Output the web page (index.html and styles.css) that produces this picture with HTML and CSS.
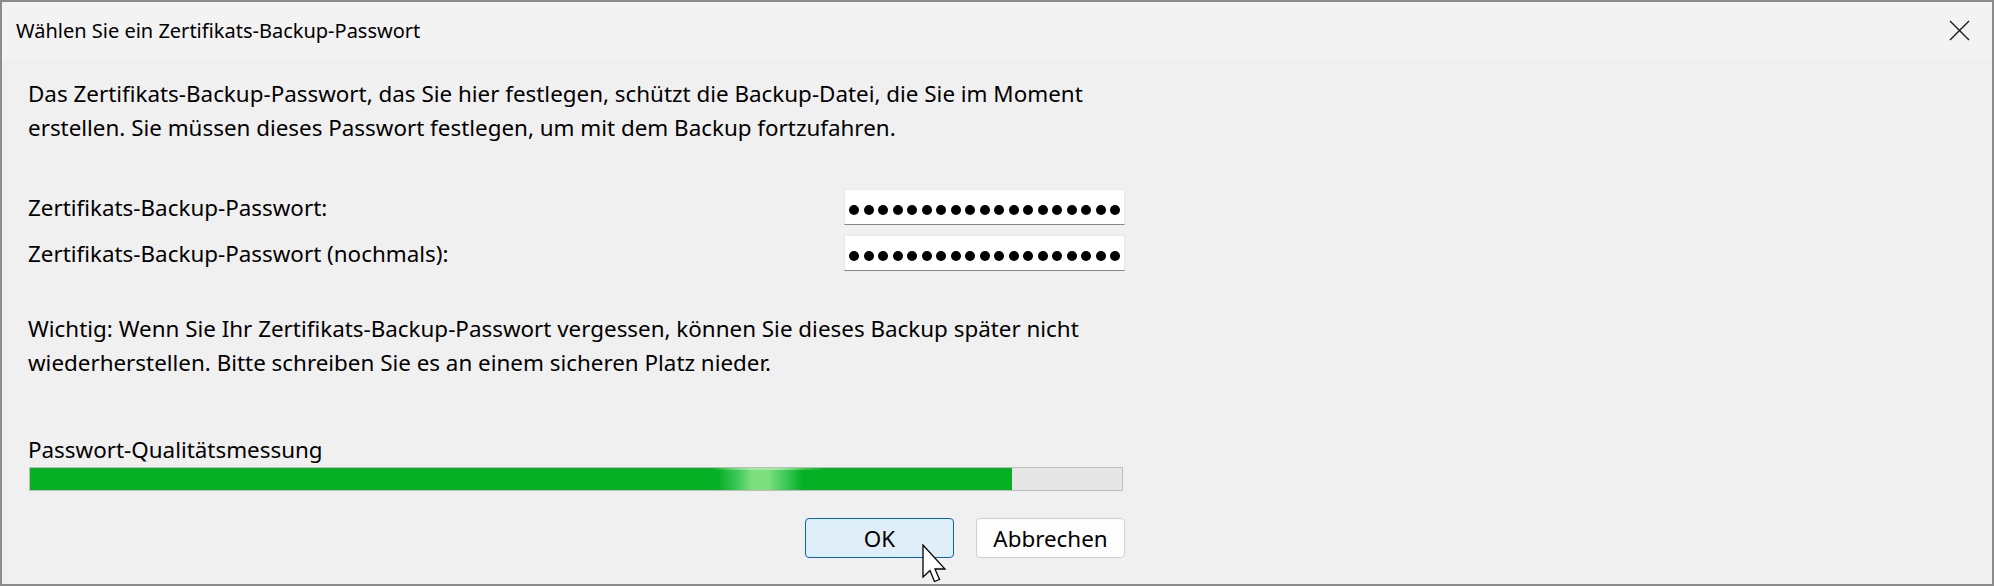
FILE: index.html
```html
<!DOCTYPE html>
<html lang="de">
<head>
<meta charset="utf-8">
<title>Wählen Sie ein Zertifikats-Backup-Passwort</title>
<link rel="stylesheet" href="styles.css">
</head>
<body>
  <div class="dialog">
    <div class="titlebar">
      <span class="title">Wählen Sie ein Zertifikats-Backup-Passwort</span>
      <svg class="close" width="21" height="21" viewBox="0 0 21 21">
        <path d="M1 1 L20 20 M20 1 L1 20" stroke="#1a1a1a" stroke-width="1.4" fill="none"/>
      </svg>
    </div>
    <div class="content">
      <p class="intro">Das Zertifikats-Backup-Passwort, das Sie hier festlegen, schützt die Backup-Datei, die Sie im Moment<br>erstellen. Sie müssen dieses Passwort festlegen, um mit dem Backup fortzufahren.</p>

      <div class="fields">
        <label>Zertifikats-Backup-Passwort:</label>
        <div class="field">
          <span class="dot"></span><span class="dot"></span><span class="dot"></span><span class="dot"></span><span class="dot"></span><span class="dot"></span><span class="dot"></span><span class="dot"></span><span class="dot"></span><span class="dot"></span><span class="dot"></span><span class="dot"></span><span class="dot"></span><span class="dot"></span><span class="dot"></span><span class="dot"></span><span class="dot"></span><span class="dot"></span><span class="dot"></span>
        </div>
        <label>Zertifikats-Backup-Passwort (nochmals):</label>
        <div class="field">
          <span class="dot"></span><span class="dot"></span><span class="dot"></span><span class="dot"></span><span class="dot"></span><span class="dot"></span><span class="dot"></span><span class="dot"></span><span class="dot"></span><span class="dot"></span><span class="dot"></span><span class="dot"></span><span class="dot"></span><span class="dot"></span><span class="dot"></span><span class="dot"></span><span class="dot"></span><span class="dot"></span><span class="dot"></span>
        </div>
      </div>

      <p class="warning">Wichtig: Wenn Sie Ihr Zertifikats-Backup-Passwort vergessen, können Sie dieses Backup später nicht<br>wiederherstellen. Bitte schreiben Sie es an einem sicheren Platz nieder.</p>

      <div class="quality-label">Passwort-Qualitätsmessung</div>
      <div class="meter"><div class="meter-fill" style="width: 89.9%"></div></div>

      <div class="buttons">
        <button class="btn btn-default">OK</button>
        <button class="btn">Abbrechen</button>
      </div>
    </div>

    <svg class="cursor" width="26" height="40" viewBox="0 0 26 40">
      <path d="M1 1 V33 L8 26.5 L12.5 37.5 L17.5 35.5 L13 25 L23 25 Z" fill="#fff" stroke="#000" stroke-width="1.3" stroke-linejoin="miter"/>
    </svg>
  </div>
</body>
</html>
```

FILE: styles.css
```css
html, body {
  margin: 0;
  padding: 0;
  width: 100%;
  height: 100%;
}
body {
  overflow: hidden;
  background-color: #8c8c8c;
  font-family: "Noto Sans", "Open Sans", Arial, sans-serif;
  font-size: 20px;
  color: #000;
}

.dialog {
  position: relative;
  display: flex;
  flex-direction: column;
  width: 1990px;
  height: 582px;
  margin: 2px 0 0 2px;
  background-color: #f0f0f0;
}

.titlebar {
  flex: none;
  display: flex;
  align-items: center;
  justify-content: space-between;
  height: 56px;
  padding: 0 22px 0 14px;
  background-color: #f3f3f3;
}
.close {
  display: block;
}

.content {
  width: 1097px;
  padding: 19px 0 0 26px;
  font-size: 22.4px;
}
.intro,
.warning {
  margin: 0;
  line-height: 34px;
}
.warning {
  margin-top: 41px;
}

.fields {
  display: grid;
  grid-template-columns: 816px 281px;
  row-gap: 10px;
  align-items: center;
  margin-top: 44px;
}
.field {
  box-sizing: border-box;
  display: flex;
  align-items: center;
  gap: 4.5px;
  height: 36px;
  padding: 6px 0 0 4px;
  background-color: #fff;
  border: 1px solid #e8e8e8;
  border-bottom-color: #858585;
}
.dot {
  flex: none;
  width: 10px;
  height: 10px;
  border-radius: 50%;
  background-color: #000;
}

.quality-label {
  margin-top: 53px;
  line-height: 34px;
}
.meter {
  box-sizing: border-box;
  width: 1094px;
  height: 24px;
  margin-left: 1px;
  border: 1px solid #bcbcbc;
  background-color: #e6e6e6;
}
.meter-fill {
  height: 100%;
  background-color: #06b025;
  background-image:
    linear-gradient(to right, rgba(160,240,160,0) 680px, rgba(170,240,170,0.8) 722px, rgba(170,240,170,0.8) 748px, rgba(160,240,160,0) 795px),
    linear-gradient(to right, #06b025 0, #06b025 688px, #3fc95a 708px, #7ddf7d 722px, #7ddf7d 738px, #3fc95a 755px, #06b025 772px);
  background-size: 100% 2px, 100% 100%;
  background-repeat: no-repeat;
}

.buttons {
  display: flex;
  justify-content: flex-end;
  gap: 22px;
  margin-top: 27px;
}
.btn {
  box-sizing: border-box;
  width: 149px;
  height: 40px;
  padding: 0;
  font: inherit;
  color: #000;
  background-color: #fdfdfd;
  border: 1px solid #d0d0d0;
  border-radius: 4px;
}
.btn-default {
  background-color: #e0eef9;
  border-color: #0067c0;
}

.cursor {
  position: absolute;
  left: 920px;
  top: 542px;
}
```
